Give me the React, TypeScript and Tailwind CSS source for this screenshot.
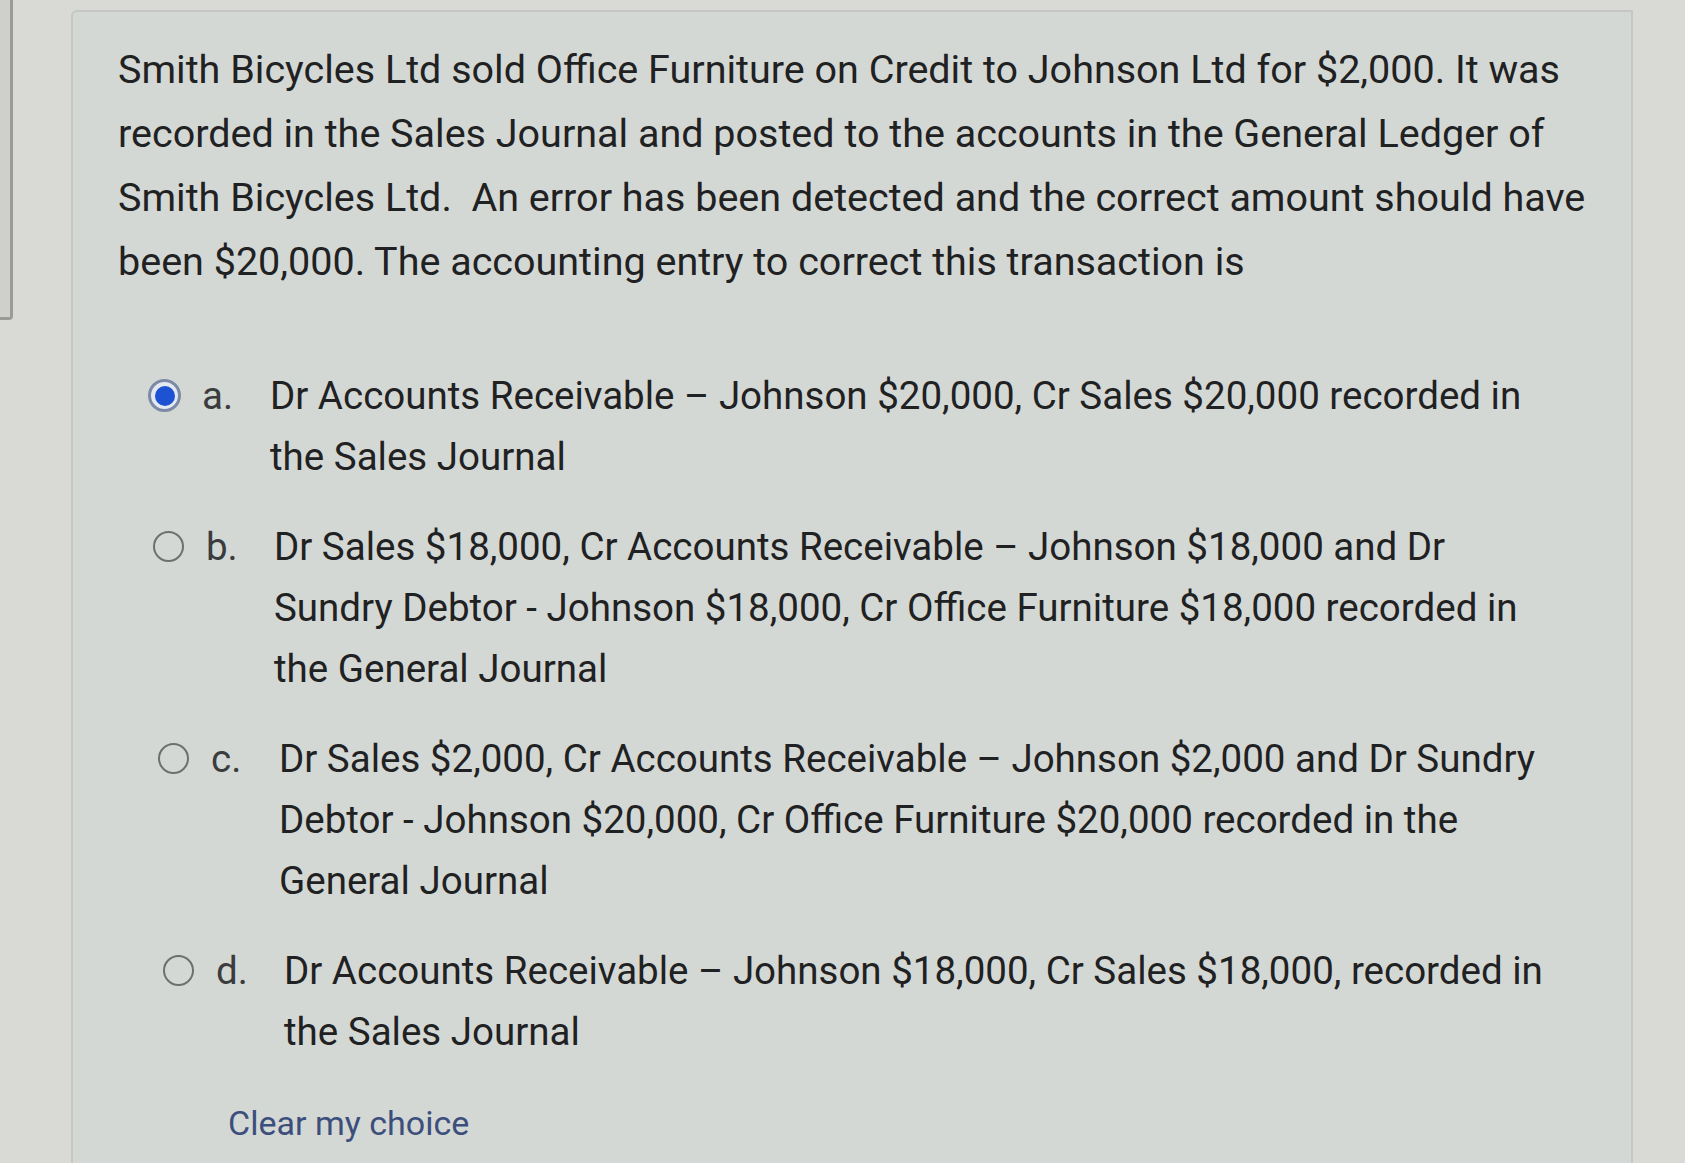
const options = [
  {
    letter: "a.",
    selected: true,
    shift: "pl-0",
    lines: [
      "Dr Accounts Receivable – Johnson $20,000, Cr Sales $20,000 recorded in",
      "the Sales Journal",
    ],
  },
  {
    letter: "b.",
    selected: false,
    shift: "pl-[4px]",
    lines: [
      "Dr Sales $18,000, Cr Accounts Receivable – Johnson $18,000 and Dr",
      "Sundry Debtor - Johnson $18,000, Cr Office Furniture $18,000 recorded in",
      "the General Journal",
    ],
  },
  {
    letter: "c.",
    selected: false,
    shift: "pl-[9px]",
    lines: [
      "Dr Sales $2,000, Cr Accounts Receivable – Johnson $2,000 and Dr Sundry",
      "Debtor - Johnson $20,000, Cr Office Furniture $20,000 recorded in the",
      "General Journal",
    ],
  },
  {
    letter: "d.",
    selected: false,
    shift: "pl-[14px]",
    lines: [
      "Dr Accounts Receivable – Johnson $18,000, Cr Sales $18,000, recorded in",
      "the Sales Journal",
    ],
  },
];

function Radio({ checked }: { checked: boolean }) {
  if (checked) {
    return (
      <span className="flex h-[33px] w-[33px] items-center justify-center rounded-full border-[3px] border-[#7d8aa6] bg-[#e3e8f1]">
        <span className="h-[20px] w-[20px] rounded-full bg-[#1d52d2]" />
      </span>
    );
  }
  return <span className="block h-[31px] w-[31px] rounded-full border-[2.5px] border-[#6c706e]" />;
}

export default function App() {
  return (
    <div className="flex h-[1163px] w-[1685px] overflow-hidden bg-[#d9dad6] font-['Roboto','Liberation_Sans',sans-serif] text-[#1f2122]">
      <div className="h-[320px] w-[13px] shrink-0 rounded-br-sm border-r-[3px] border-b-[3px] border-[#9a9b98] bg-[#cfd0cc]" />

      <div className="ml-[58px] mt-[10px] w-[1562px] shrink-0 rounded-tl-md border-l-2 border-t-2 border-r-2 border-[#c4c7c4] bg-[#d4d8d5] pl-[45px] pt-[26px]">
        <p className="whitespace-nowrap text-[39.5px] leading-[64px]">
          Smith Bicycles Ltd sold Office Furniture on Credit to Johnson Ltd for $2,000. It was
          <br />
          recorded in the Sales Journal and posted to the accounts in the General Ledger of
          <br />
          Smith Bicycles Ltd.&nbsp; An error has been detected and the correct amount should have
          <br />
          been $20,000. The accounting entry to correct this transaction is
        </p>

        <div className="mt-[71px] flex flex-col gap-[29px] pl-[30px]">
          {options.map((o) => (
            <div key={o.letter} className={`flex items-start ${o.shift}`}>
              <div className="flex h-[61px] w-[33px] items-center justify-center">
                <Radio checked={o.selected} />
              </div>
              <span className="ml-[21px] w-[68px] text-[38.5px] leading-[61px] text-[#3a3c3d]">{o.letter}</span>
              <p className="whitespace-nowrap text-[38.5px] leading-[61px]">
                {o.lines.map((l, i) => (
                  <span key={i} className="block">
                    {l}
                  </span>
                ))}
              </p>
            </div>
          ))}
        </div>

        <button className="mt-[33px] pl-[110px] text-[34px] leading-[56px] text-[#3c4f7c]">Clear my choice</button>
      </div>
    </div>
  );
}
